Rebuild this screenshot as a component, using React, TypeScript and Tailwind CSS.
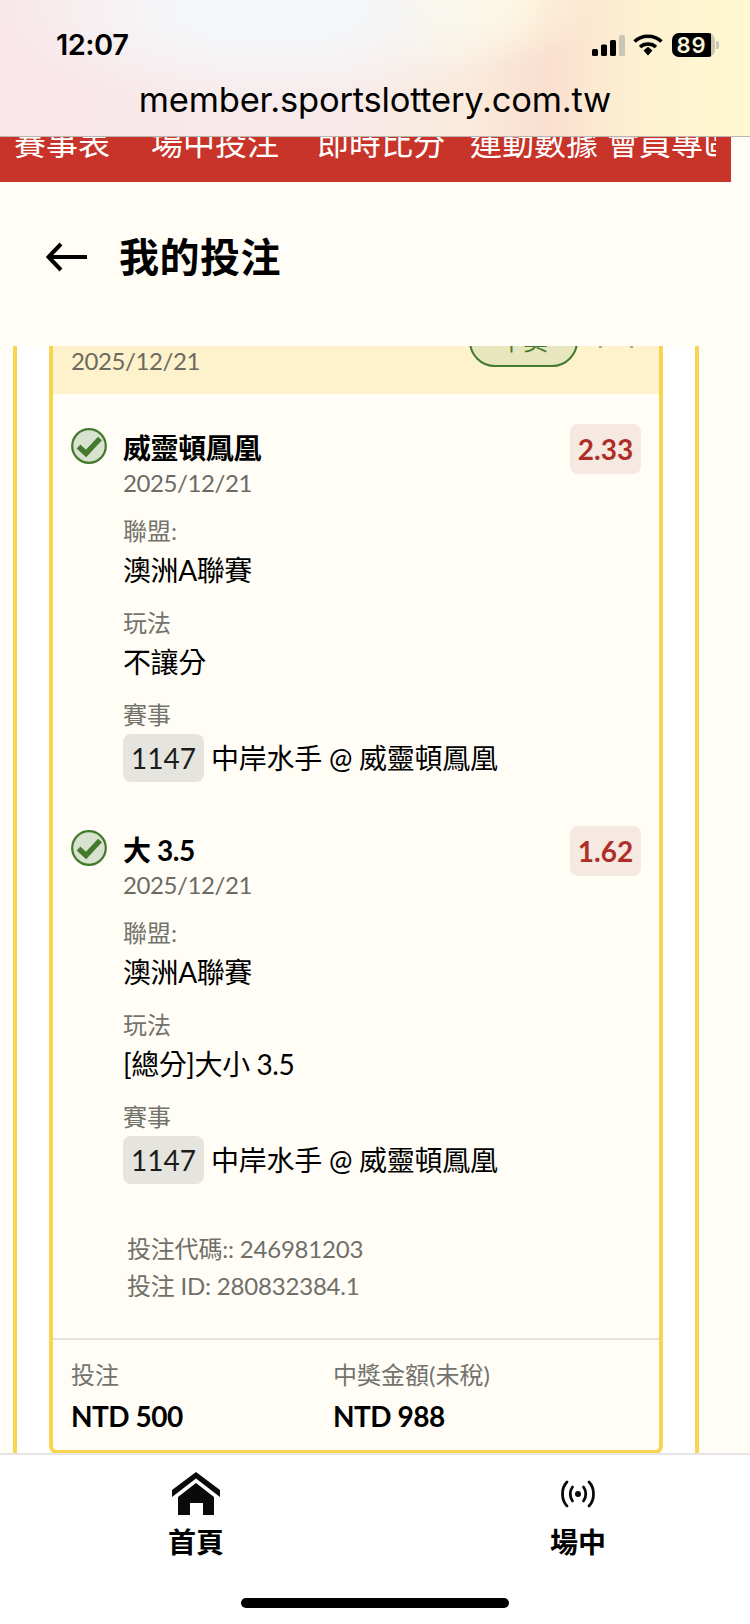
import React from "react";

function Check() {
  return (
    <svg width="36" height="36" viewBox="0 0 36 36" className="mt-[4px] shrink-0">
      <circle cx="18" cy="18" r="16.8" fill="#d8e2cf" stroke="#437a2e" strokeWidth="2.2" />
      <path d="M7.5 18.5 L15 25.5 L29 10.5" fill="none" stroke="#437a2e" strokeWidth="5.4" />
    </svg>
  );
}

function Field({ label, value, top }: { label: string; value: string; top: string }) {
  return (
    <div className={top}>
      <div className="text-[24px] leading-[32px] text-[#73736d]">{label}</div>
      <div className="mt-[5px] text-[28px] leading-[36px] tracking-[-0.4px] text-black">{value}</div>
    </div>
  );
}

function Leg({ title, odds }: { title: string; odds: string }) {
  return (
    <div className="flex items-start pl-[18px] pr-[18px]">
      <Check />
      <div className="ml-[16px] flex-1">
        <div className="mt-[6px] text-[28px] leading-[36px] font-bold tracking-[-0.4px] text-black">{title}</div>
        <div className="mt-[1px] text-[24px] leading-[32px] tracking-[-0.4px] text-[#6b6b66]">2025/12/21</div>
        <Field top="mt-[16px]" label="聯盟:" value="澳洲A聯賽" />
        <Field top="mt-[19px]" label="玩法" value={title === "大 3.5" ? "[總分]大小 3.5" : "不讓分"} />
        <div className="mt-[19px]">
          <div className="text-[24px] leading-[32px] text-[#73736d]">賽事</div>
          <div className="mt-[3px] flex items-center">
            <span className="flex h-[48px] w-[81px] items-center justify-center rounded-[8px] bg-[#e5e4de] text-[28px] text-[#1c1c1c]">1147</span>
            <span className="ml-[7px] text-[28px] leading-[36px] tracking-[-0.25px] text-black">中岸水手 @ 威靈頓鳳凰</span>
          </div>
        </div>
      </div>
      <div className="flex h-[50px] w-[71px] shrink-0 items-center justify-center rounded-[8px] bg-[#f5e9e2] text-[28px] font-bold text-[#ae2f27]">{odds}</div>
    </div>
  );
}

export default function App() {
  return (
    <div className="flex h-[1624px] w-[750px] flex-col overflow-hidden bg-[#fffdf5] font-['Lato','Noto_Sans_CJK_TC',sans-serif]">
      {/* browser chrome */}
      <div className="h-[137px] shrink-0 border-b border-[#b9b6b2] bg-[radial-gradient(ellipse_280px_100px_at_270px_10px,#f5f6f8_35%,transparent_100%),radial-gradient(ellipse_130px_70px_at_470px_0px,#fef8de_30%,transparent_100%),linear-gradient(90deg,#f9e6e8_0%,#f8eaea_45%,#faebdc_62%,#fadfd0_73%,#fdf1d2_85%,#fff8d0_100%)] pt-[28px]">
        <div className="flex h-[34px] items-center">
          <span className="ml-[56px] w-[536px] font-['Inter',sans-serif] text-[29px] font-semibold tracking-[-0.5px] text-black">12:07</span>
          <svg width="33" height="21" viewBox="0 0 33 21" className="shrink-0">
            <rect x="0" y="14" width="6" height="7" rx="1.5" fill="#000" />
            <rect x="9" y="9.5" width="6" height="11.5" rx="1.5" fill="#000" />
            <rect x="18" y="5" width="6" height="16" rx="1.5" fill="#000" />
            <rect x="27" y="0" width="6" height="21" rx="1.5" fill="#c9c6b4" />
          </svg>
          <svg width="30" height="22" viewBox="0 0 30 22" className="ml-[8px] shrink-0">
            <path d="M1.5 7.5 C9 0.5 21 0.5 28.5 7.5" fill="none" stroke="#000" strokeWidth="3.6" />
            <path d="M7 13 C11.5 9 18.5 9 23 13" fill="none" stroke="#000" strokeWidth="3.6" />
            <path d="M10.5 16.5 L15 12.8 L19.5 16.5 L15 21.5 Z" fill="#000" />
          </svg>
          <div className="relative ml-[9px] flex h-[24px] w-[43px] shrink-0 items-center justify-center overflow-hidden rounded-[7px] bg-[#c9c6b4]">
            <div className="mr-[4px] flex h-full w-[39px] items-center justify-center bg-black font-['Inter',sans-serif] text-[22px] font-semibold tracking-[1px] text-[#fdf5d8]">89</div>
          </div>
          <div className="ml-[1px] h-[8px] w-[3px] shrink-0 rounded-r-[2px] bg-[#c9c6b4]" />
        </div>
        <div className="mt-[16px] text-center font-['Inter',sans-serif] text-[34.5px] leading-[44px] tracking-[-0.2px] text-black">member.sportslottery.com.tw</div>
      </div>

      {/* red nav, scrolled partly under the chrome */}
      <div className="h-[45px] w-[731px] shrink-0 overflow-hidden bg-[#c8342a]">
        <div className="-mt-[14px] flex h-[40px] w-[716px] items-center overflow-hidden whitespace-nowrap text-[32px] leading-[40px] text-white">
          <span className="ml-[14px] shrink-0">賽事表</span>
          <span className="ml-[41px] shrink-0">場中投注</span>
          <span className="ml-[38px] shrink-0">即時比分</span>
          <span className="ml-[25px] shrink-0">運動數據</span>
          <span className="ml-[9px] shrink-0">會員專區</span>
        </div>
      </div>

      {/* page header */}
      <div className="h-[164px] shrink-0 pt-[49px]">
        <div className="flex h-[52px] items-center">
          <svg width="42" height="30" viewBox="0 0 42 30" className="ml-[46px] shrink-0">
            <path d="M41 15 H3 M15 2 L2.5 15 L15 28" fill="none" stroke="#000" strokeWidth="4" />
          </svg>
          <h1 className="ml-[31px] text-[40px] leading-[52px] font-bold tracking-[0.5px] text-black">我的投注</h1>
        </div>
      </div>

      {/* scrolled content */}
      <div className="flex-1 overflow-hidden">
        <div className="ml-[13px] w-[686px] border-x-4 border-[#f9d44f] bg-white px-[32px]">
          <div className="rounded-b-[8px] border-x-4 border-b-4 border-[#f9d44f] bg-[#fffdf6]">
            <div className="flex h-[48px] items-start justify-between bg-[#fdf2cb] pl-[18px]">
              <span className="text-[24px] leading-[30px] tracking-[-0.4px] text-[#6b6b60]">2025/12/21</span>
              <div className="flex items-start">
                <div className="-mt-[31px] flex h-[52px] w-[109px] items-center justify-center rounded-[26px] border-2 border-[#437a2e] bg-[#e7e6bf] text-[24px] text-[#437a2e]">中獎</div>
                <span className="ml-[21px] h-[2px] w-[3px] bg-[#a8a8a0]" />
                <span className="ml-[28px] mr-[26px] h-[2px] w-[3px] bg-[#a8a8a0]" />
              </div>
            </div>

            <div className="flex flex-col gap-[44px] pt-[30px]">
              <Leg title="威靈頓鳳凰" odds="2.33" />
              <Leg title="大 3.5" odds="1.62" />
            </div>

            <div className="mt-[47px] pl-[74px] text-[24px] leading-[36px] tracking-[-0.2px] text-[#6f6f6a]">
              <div>投注代碼:: 246981203</div>
              <div className="mt-[1px]">投注 ID: 280832384.1</div>
            </div>

            <div className="mt-[34px] flex border-t-2 border-[#e5e4de] pb-[16px] pl-[18px] pt-[19px]">
              <div className="w-[262px]">
                <div className="text-[24px] leading-[32px] text-[#73736d]">投注</div>
                <div className="mt-[7px] text-[28px] leading-[36px] font-bold tracking-[-0.5px] text-black">NTD 500</div>
              </div>
              <div>
                <div className="text-[24px] leading-[32px] text-[#73736d]">中獎金額(未稅)</div>
                <div className="mt-[7px] text-[28px] leading-[36px] font-bold tracking-[-0.5px] text-black">NTD 988</div>
              </div>
            </div>
          </div>
        </div>
      </div>

      {/* bottom nav */}
      <div className="h-[171px] shrink-0 border-t-2 border-[#e5e5e5] bg-white pt-[17px]">
        <div className="flex">
          <div className="ml-[146px] flex w-[100px] flex-col items-center">
            <svg width="48" height="43" viewBox="0 0 48 43">
              <path d="M24 0 L48 18 V25 L24 6.5 L0 25 V18 Z" fill="#0a0a0a" />
              <path d="M24 11 L42 25 V43 H31 V31 H18 V43 H6 V25 Z" fill="#0a0a0a" />
            </svg>
            <span className="mt-[9px] text-[28px] leading-[36px] font-bold text-black">首頁</span>
          </div>
          <div className="ml-[282px] flex w-[100px] flex-col items-center">
            <div className="h-[43px] pt-[8px]">
              <svg width="36" height="28" viewBox="0 0 36 28" className="block">
                <g fill="none" stroke="#0a0a0a" strokeWidth="2.8" strokeLinecap="round">
                  <path d="M7 2 C1 8 1 20 7 26" />
                  <path d="M12.5 7 C9.5 11 9.5 17 12.5 21" />
                  <path d="M29 2 C35 8 35 20 29 26" />
                  <path d="M23.5 7 C26.5 11 26.5 17 23.5 21" />
                </g>
                <circle cx="18" cy="14" r="3" fill="#0a0a0a" />
              </svg>
            </div>
            <span className="mt-[9px] text-[28px] leading-[36px] font-bold text-black">場中</span>
          </div>
        </div>
        <div className="ml-[241px] mt-[38px] h-[10px] w-[268px] rounded-full bg-black" />
      </div>
    </div>
  );
}
